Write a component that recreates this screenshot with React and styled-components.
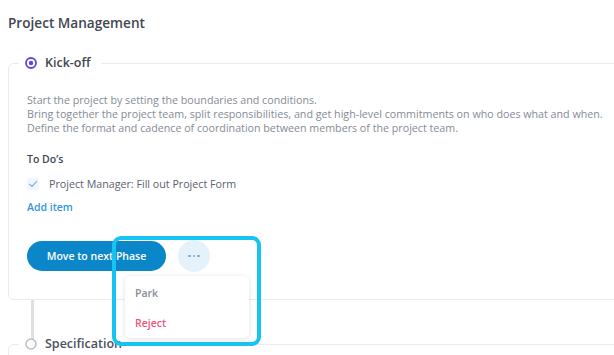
import React from 'react'
import styled, { createGlobalStyle } from 'styled-components'

const GlobalStyle = createGlobalStyle`
  html, body {
    margin: 0;
    background: #fff;
    overflow: hidden;
  }
  body {
    padding: 13px 0 0 8px;
    font-family: 'Open Sans', 'Noto Sans', sans-serif;
  }
`

const phases = [
  {
    name: 'Kick-off',
    active: true,
    description: [
      'Start the project by setting the boundaries and conditions.',
      'Bring together the project team, split responsibilities, and get high-level commitments on who does what and when.',
      'Define the format and cadence of coordination between members of the project team.',
    ],
    todos: ['Project Manager: Fill out Project Form'],
  },
  { name: 'Specification', active: false },
]

const RadioMark = ({ active }) => (
  <svg width='12' height='12' viewBox='0 0 12 12'>
    <circle
      cx='6'
      cy='6'
      r='5'
      fill='none'
      stroke={active ? '#5a47e0' : '#b8bdc6'}
      strokeWidth={active ? '1.8' : '1.5'}
    />
    {active && <circle cx='6' cy='6' r='2.2' fill='#5a47e0' />}
  </svg>
)

const App = () => {
  return (
    <Wrapper>
      <GlobalStyle />
      <Title>Project Management</Title>
      {phases.map((phase, index) => (
        <React.Fragment key={phase.name}>
          {index > 0 && <Connector />}
          <Phase $open={phase.active}>
            <Legend $active={phase.active}>
              <RadioMark active={phase.active} />
              <span>{phase.name}</span>
            </Legend>
            {phase.active && (
              <>
                <Description>
                  {phase.description.map((line) => (
                    <p key={line}>{line}</p>
                  ))}
                </Description>
                <TodoTitle>To Do&rsquo;s</TodoTitle>
                {phase.todos.map((todo) => (
                  <TodoRow key={todo}>
                    <Check>
                      <svg width='10' height='10' viewBox='0 0 10 10'>
                        <path
                          d='M1.5 5.2 L4 7.5 L8.6 2.4'
                          fill='none'
                          stroke='#7fb9e6'
                          strokeWidth='1.3'
                          strokeLinecap='round'
                          strokeLinejoin='round'
                        />
                      </svg>
                    </Check>
                    {todo}
                  </TodoRow>
                ))}
                <AddItem type='button'>Add item</AddItem>
                <Actions>
                  <PrimaryButton type='button'>Move to next Phase</PrimaryButton>
                  <MoreWrap>
                    <MoreButton type='button'>
                      <span />
                      <span />
                      <span />
                    </MoreButton>
                    <Menu>
                      <MenuItem>Park</MenuItem>
                      <MenuItem $danger>Reject</MenuItem>
                    </Menu>
                    <Highlight />
                  </MoreWrap>
                </Actions>
              </>
            )}
          </Phase>
        </React.Fragment>
      ))}
    </Wrapper>
  )
}

const Wrapper = styled.div`
  width: 680px;
`

const Title = styled.h1`
  margin: 0;
  font-size: 13.6px;
  line-height: 20px;
  font-weight: 600;
  color: #3f4653;
`

const Phase = styled.fieldset`
  margin: ${(p) => (p.$open ? '21px' : '-4px')} 0 0;
  padding: 21px 19px ${(p) => (p.$open ? '27px' : '40px')} 18px;
  border: 1.5px solid #e8ebf0;
  border-radius: 6px;
  min-width: 0;
`

const Legend = styled.legend`
  display: flex;
  align-items: center;
  gap: 8px;
  margin-left: -8px;
  padding: 0 10px 0 6px;
  line-height: 18px;
  font-size: 12.5px;
  font-weight: 600;
  color: ${(p) => (p.$active ? '#3f4653' : '#4a5160')};
`

const Description = styled.div`
  p {
    margin: 0;
    font-size: 10.7px;
    line-height: 14px;
    color: #858b96;
  }
`

const TodoTitle = styled.h4`
  margin: 17px 0 0;
  font-size: 10.5px;
  line-height: 14px;
  font-weight: 600;
  color: #3f4653;
`

const TodoRow = styled.div`
  display: flex;
  align-items: center;
  gap: 10px;
  margin-top: 10px;
  font-size: 10.7px;
  line-height: 16px;
  color: #5b616d;
`

const Check = styled.span`
  display: flex;
  align-items: center;
  justify-content: center;
  width: 12px;
  height: 12px;
  border-radius: 2px;
  background: #f1f7fd;
`

const AddItem = styled.button`
  display: block;
  margin-top: 8px;
  padding: 0;
  border: 0;
  background: none;
  font-family: inherit;
  font-size: 10.5px;
  line-height: 14px;
  font-weight: 600;
  color: #3596d8;
`

const Actions = styled.div`
  display: flex;
  align-items: center;
  gap: 12px;
  margin-top: 26px;
`

const PrimaryButton = styled.button`
  width: 139px;
  height: 30px;
  border: 0;
  border-radius: 15px;
  background: #0b87c9;
  color: #fff;
  font-family: inherit;
  font-size: 10.5px;
  font-weight: 600;
`

const MoreWrap = styled.div`
  position: relative;
`

const MoreButton = styled.button`
  display: flex;
  align-items: center;
  justify-content: center;
  gap: 2px;
  width: 32px;
  height: 32px;
  padding: 0;
  border: 0;
  border-radius: 50%;
  background: #e4f2fc;

  span {
    width: 2.5px;
    height: 2.5px;
    border-radius: 50%;
    background: #7fa6cf;
  }
`

const Menu = styled.div`
  position: absolute;
  left: -53px;
  top: 36px;
  width: 124px;
  padding: 2px 0 0;
  background: #fff;
  border-radius: 5px;
  box-shadow: 0 1px 5px rgba(30, 40, 60, 0.14);
  z-index: 2;
`

const MenuItem = styled.div`
  padding: 0 10px;
  font-size: 10.5px;
  font-weight: 600;
  line-height: 30px;
  color: ${(p) => (p.$danger ? '#f0557a' : '#878c96')};
`

const Highlight = styled.div`
  position: absolute;
  left: -66px;
  top: -4px;
  width: 149px;
  height: 110px;
  box-sizing: border-box;
  border: 4px solid #17c3f1;
  border-radius: 9px;
  z-index: 3;
  pointer-events: none;
`

const Connector = styled.div`
  width: 3px;
  height: 39px;
  margin-left: 23px;
  background: #dde1e6;
`

export default App
